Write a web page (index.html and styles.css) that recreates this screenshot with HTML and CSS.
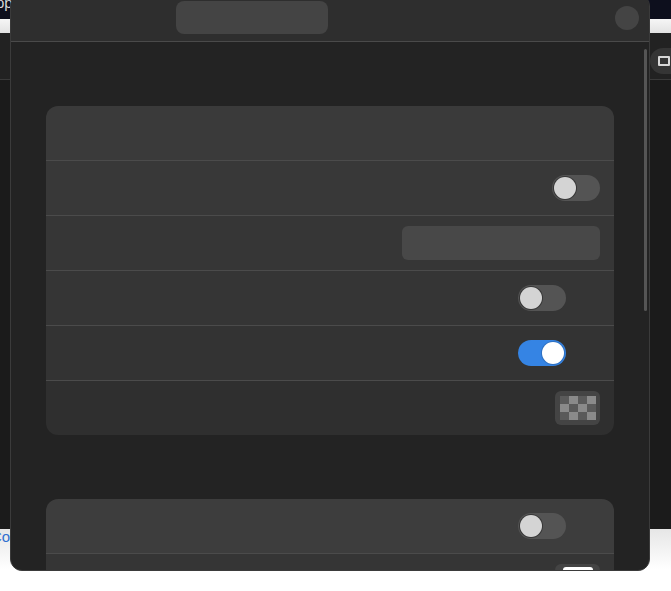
FILE: index.html
```html
<!DOCTYPE html>
<html lang="en">
<head>
<meta charset="utf-8">
<title>Settings</title>
<link rel="stylesheet" href="styles.css">
</head>
<body>
<div class="page">
  <div class="topbar"><span class="app-name">App</span></div>
  <div class="lightband"></div>
  <div class="page-header">
    <div class="page-btn"><span class="page-btn-icon"></span></div>
  </div>
  <div class="page-main"></div>
  <div class="page-foot"><span class="foot-link">Co</span></div>
</div>

<div class="modal">
  <div class="modal-header">
    <div class="title-pill"></div>
    <div class="close-dot"></div>
  </div>
  <div class="modal-body">
    <div class="card">
      <div class="row r1"></div>
      <div class="row r2"><div class="toggle"><span class="knob"></span></div></div>
      <div class="row r3"><div class="field"></div></div>
      <div class="row r4 inset"><div class="toggle"><span class="knob"></span></div></div>
      <div class="row r5 inset"><div class="toggle on"><span class="knob"></span></div></div>
      <div class="row r6"><div class="swatch"><span class="checker"></span></div></div>
    </div>
    <div class="card card2">
      <div class="row c1 inset"><div class="toggle"><span class="knob"></span></div></div>
      <div class="row c2"><div class="swatch top"><span class="white-chip"></span></div></div>
      <div class="row c3"></div>
    </div>
  </div>
  <div class="scrollbar"></div>
</div>
</body>
</html>
```

FILE: styles.css
```css
html, body {
  margin: 0;
  padding: 0;
  width: 671px;
  height: 591px;
  overflow: hidden;
  font-family: "Liberation Sans", Arial, sans-serif;
  background: #ffffff;
}

.page {
  display: flex;
  flex-direction: column;
  height: 591px;
}

.topbar {
  height: 19px;
  background: #0d0f1d;
  overflow: hidden;
}
.app-name {
  display: block;
  margin-left: -14px;
  margin-top: -6px;
  color: #d8d8d8;
  font-size: 15px;
  line-height: 18px;
}

.lightband {
  height: 14px;
  background: linear-gradient(#f6f6f6, #e2e2e2);
}

.page-header {
  height: 46px;
  background: #222222;
  border-bottom: 1px solid #3a3a3a;
  display: flex;
  justify-content: flex-end;
  align-items: center;
  overflow: hidden;
}
.page-btn {
  flex: none;
  width: 32px;
  height: 26px;
  border-radius: 13px;
  background: #353535;
  margin-right: -19px;
  margin-top: 10px;
  display: flex;
  align-items: center;
  padding-left: 8px;
}
.page-btn-icon {
  width: 8px;
  height: 6px;
  border: 2px solid #d8d8d8;
  border-radius: 1px;
}

.page-main {
  height: 449px;
  background: #1b1b1b;
}

.page-foot {
  flex: 1;
  background: linear-gradient(#e6e6e6, #ffffff 40px);
  overflow: hidden;
}
.foot-link {
  display: block;
  margin-left: -9px;
  margin-top: 0px;
  color: #2f6fd0;
  font-size: 15px;
  line-height: 16px;
}

/* Modal */
.modal {
  position: fixed;
  left: 10px;
  top: -6px;
  width: 638px;
  height: 575px;
  background: #232323;
  border: 1px solid #3b3b3b;
  border-radius: 12px;
  overflow: hidden;
  display: flex;
  flex-direction: column;
}

.modal-header {
  flex: none;
  height: 46px;
  background: #2e2e2e;
  border-bottom: 1px solid #4a4a4a;
  display: flex;
  align-items: center;
  justify-content: space-between;
  padding: 0 10px 0 165px;
}
.title-pill {
  width: 152px;
  height: 33px;
  margin-top: -1px;
  border-radius: 8px;
  background: #444444;
}
.close-dot {
  width: 24px;
  height: 24px;
  border-radius: 50%;
  background: #444444;
}

.modal-body {
  flex: 1;
  padding: 64px 35px 0 35px;
  display: flex;
  flex-direction: column;
  gap: 64px;
}

.card {
  border-radius: 12px;
  overflow: hidden;
  flex: none;
}

.row {
  height: 54px;
  display: flex;
  align-items: center;
  justify-content: flex-end;
  padding-right: 14px;
}
.row + .row {
  border-top: 1px solid #4b4b4b;
}
.row.inset {
  padding-right: 48px;
}

.r1 { background: #3a3a3a; }
.r2 { background: #383838; }
.r3 { background: #363636; }
.r4 { background: #353535; }
.r5 { background: #333333; }
.r6 { background: #2f2f2f; }
.c1 { background: #3d3d3d; }
.c2 { background: #353535; align-items: flex-start; }
.c3 { background: #333333; }

.toggle {
  width: 48px;
  height: 26px;
  border-radius: 13px;
  background: #545454;
  display: flex;
  align-items: center;
  padding: 0 2px;
  box-sizing: border-box;
}
.knob {
  width: 22px;
  height: 22px;
  border-radius: 50%;
  background: #d4d4d4;
  box-shadow: 0 0 0 1px rgba(0, 0, 0, 0.35);
}
.toggle.on {
  background: #3584e4;
  justify-content: flex-end;
}
.toggle.on .knob {
  background: #ffffff;
  box-shadow: 0 0 0 1px rgba(0, 0, 0, 0.15);
}

.field {
  width: 198px;
  height: 34px;
  border-radius: 6px;
  background: #484848;
}

.swatch {
  width: 45px;
  height: 34px;
  border-radius: 6px;
  background: #444444;
  display: flex;
  align-items: center;
  justify-content: center;
}
.swatch.top {
  margin-top: 10px;
  align-items: flex-start;
  padding-top: 3px;
  box-sizing: border-box;
}
.checker {
  width: 36px;
  height: 24px;
  background-color: #5a5a5a;
  background-image: conic-gradient(#8a8a8a 25%, transparent 0 50%, #8a8a8a 0 75%, transparent 0);
  background-size: 18px 16px;
}
.white-chip {
  width: 30px;
  height: 28px;
  border-radius: 3px;
  background: #ffffff;
}

.scrollbar {
  position: absolute;
  left: 633px;
  top: 54px;
  width: 3px;
  height: 262px;
  border-radius: 2px;
  background: #555555;
}
```
